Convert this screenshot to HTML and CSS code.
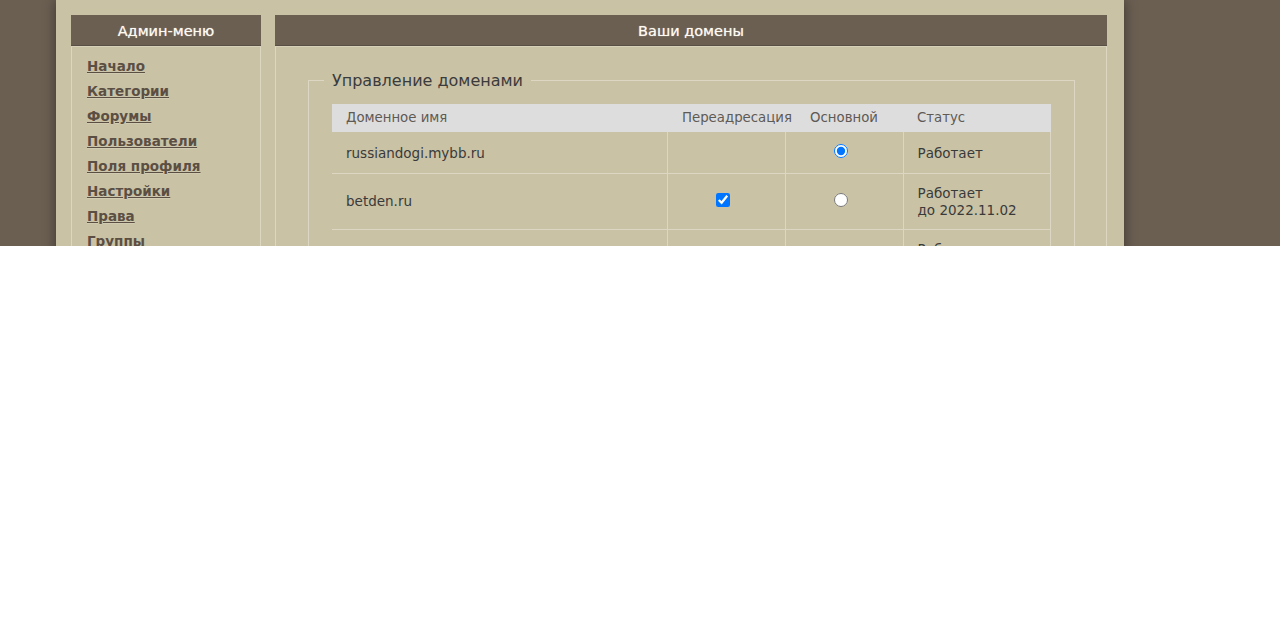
FILE: index.html
```html
<!DOCTYPE html>
<html lang="ru">
<head>
  <meta charset="UTF-8">
  <title>Ваши домены</title>
  <link rel="stylesheet" href="styles.css">
</head>
<body>
  <div class="viewport">
    <div class="wrapper">

      <div class="sidebar">
        <div class="block-title">Админ-меню</div>
        <div class="block-body">
          <ul class="admin-menu">
            <li><a href="#">Начало</a></li>
            <li><a href="#">Категории</a></li>
            <li><a href="#">Форумы</a></li>
            <li><a href="#">Пользователи</a></li>
            <li><a href="#">Поля профиля</a></li>
            <li><a href="#">Настройки</a></li>
            <li><a href="#">Права</a></li>
            <li><a href="#">Группы</a></li>
            <li><a href="#">Модерация</a></li>
          </ul>
        </div>
      </div>

      <div class="main">
        <div class="block-title">Ваши домены</div>
        <div class="block-body main-body">
          <fieldset>
            <legend>Управление доменами</legend>
            <table class="domains">
              <thead>
                <tr>
                  <th class="col-name">Доменное имя</th>
                  <th class="col-redirect">Переадресация</th>
                  <th class="col-main">Основной</th>
                  <th class="col-status">Статус</th>
                </tr>
              </thead>
              <tbody>
                <tr class="row-single">
                  <td>russiandogi.mybb.ru</td>
                  <td class="center"></td>
                  <td class="center"><input type="radio" name="main" checked></td>
                  <td>Работает</td>
                </tr>
                <tr>
                  <td>betden.ru</td>
                  <td class="center"><input type="checkbox" checked></td>
                  <td class="center"><input type="radio" name="main"></td>
                  <td>Работает<br>до 2022.11.02</td>
                </tr>
                <tr>
                  <td>www.betden.ru</td>
                  <td class="center"><input type="checkbox" checked></td>
                  <td class="center"><input type="radio" name="main"></td>
                  <td>Работает<br>до 2022.11.02</td>
                </tr>
              </tbody>
            </table>
          </fieldset>
        </div>
      </div>

    </div>
  </div>
</body>
</html>
```

FILE: styles.css
```css
body {
  margin: 0;
  background: #ffffff;
  font-family: 'DejaVu Sans', Verdana, sans-serif;
  font-size: 13.5px;
  color: #3d3d3d;
}

.viewport {
  height: 246px;
  overflow: hidden;
  background: #6b5f52;
}

.wrapper {
  display: flex;
  gap: 14px;
  margin-left: 56px;
  width: 1036px;
  height: 100%;
  padding: 15px 17px 0 15px;
  background: #c9c2a5;
  box-shadow: 0 0 12px rgba(0, 0, 0, 0.45);
}

.sidebar {
  width: 190px;
  flex-shrink: 0;
}

.main {
  flex: 1;
}

.block-title {
  height: 30px;
  line-height: 32px;
  background: #6b5f52;
  border-bottom: 1px solid #5a4f44;
  color: #fffaf0;
  text-align: center;
  font-size: 14.5px;
  text-shadow: 0 0 1px rgba(255, 255, 255, 0.7);
}

.block-body {
  border-left: 1px solid #ddd6c1;
  border-right: 1px solid #ddd6c1;
  border-top: 1px solid #d8d1ba;
  height: 400px;
}

.admin-menu {
  list-style: none;
  margin: 0;
  padding: 10px 0 0 15px;
}

.admin-menu li {
  height: 25px;
  line-height: 19px;
}

.admin-menu a {
  color: #5b4f43;
  font-weight: bold;
  font-size: 13.5px;
  text-decoration: underline;
  text-shadow: 0 1px 0 rgba(255, 255, 255, 0.15);
}

.main-body {
  padding: 24px 31px 0 32px;
}

fieldset {
  margin: 0;
  padding: 14px 23px 0 23px;
  border: 1px solid #ddd6c3;
}

legend {
  margin-left: -8px;
  padding: 0 8px;
  font-size: 16px;
  color: #3b3b3b;
}

.domains {
  width: 100%;
  border-collapse: collapse;
  table-layout: fixed;
}

.domains th {
  height: 26px;
  padding: 0 0 2px 14px;
  background: #dddddd;
  color: #5e5a55;
  font-weight: normal;
  font-size: 13.3px;
  text-align: left;
  white-space: nowrap;
}

.domains th.col-name { width: 321px; }
.domains th.col-redirect { width: 103px; padding-left: 15px; }
.domains th.col-main { width: 118px; padding-left: 0; text-align: center; }

.domains td {
  padding: 0 14px;
  height: 40px;
  border-right: 1px solid #ddd6c3;
  border-bottom: 1px solid #ddd6c3;
  line-height: 17px;
  color: #3a3a3a;
}

.domains tbody tr {
  height: 56px;
}

.domains tbody tr.row-single {
  height: 41px;
}

.domains tbody tr.row-single td {
  padding-top: 1px;
}

.domains td.center {
  text-align: center;
  padding: 0 7px 0 0;
}

.domains input {
  margin: 0 0 4px 0;
  width: 14px;
  height: 14px;
  vertical-align: middle;
}
```
